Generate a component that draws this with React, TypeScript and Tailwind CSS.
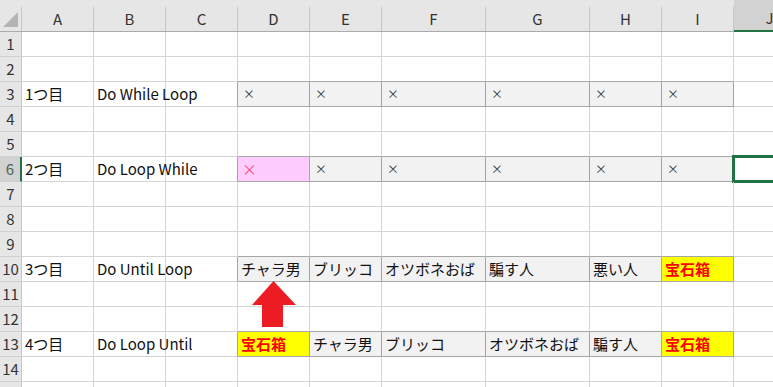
import React from "react";

type Fill = "gray" | "pink" | "yellow";

interface Cell {
  text?: string;
  fill?: Fill;
  tone?: "mark" | "markPink" | "gem";
}

const COLUMNS: { key: string; width: string }[] = [
  { key: "A", width: "w-[72px]" },
  { key: "B", width: "w-[72px]" },
  { key: "C", width: "w-[72px]" },
  { key: "D", width: "w-[72px]" },
  { key: "E", width: "w-[72px]" },
  { key: "F", width: "w-[104px]" },
  { key: "G", width: "w-[104px]" },
  { key: "H", width: "w-[72px]" },
  { key: "I", width: "w-[72px]" },
  { key: "J", width: "w-[72px]" },
];

const mark: Cell = { text: "×", fill: "gray", tone: "mark" };
const gem: Cell = { text: "宝石箱", fill: "yellow", tone: "gem" };
const name = (text: string): Cell => ({ text, fill: "gray" });

const SHEET: Record<number, Record<string, Cell>> = {
  3: {
    A: { text: "1つ目" },
    B: { text: "Do While Loop" },
    D: mark, E: mark, F: mark, G: mark, H: mark, I: mark,
  },
  6: {
    A: { text: "2つ目" },
    B: { text: "Do Loop While" },
    D: { text: "×", fill: "pink", tone: "markPink" },
    E: mark, F: mark, G: mark, H: mark, I: mark,
  },
  10: {
    A: { text: "3つ目" },
    B: { text: "Do Until Loop" },
    D: name("チャラ男"),
    E: name("ブリッコ"),
    F: name("オツボネおば"),
    G: name("騙す人"),
    H: name("悪い人"),
    I: gem,
  },
  13: {
    A: { text: "4つ目" },
    B: { text: "Do Loop Until" },
    D: gem,
    E: name("チャラ男"),
    F: name("ブリッコ"),
    G: name("オツボネおば"),
    H: name("騙す人"),
    I: gem,
  },
};

// row 15 only peeks in at the bottom edge, so its number isn't drawn
const ROWS = Array.from({ length: 15 }, (_, i) => i + 1);
const LAST_FULL_ROW = 14;

function boxed(row: number, col: number) {
  const key = COLUMNS[col]?.key;
  if (!key) return false;
  return !!SHEET[row]?.[key]?.fill;
}

const FILL_BG: Record<Fill, string> = {
  gray: "bg-[#f2f2f2]",
  pink: "bg-[#ffccff]",
  yellow: "bg-[#ffff00]",
};

const TONE: Record<string, string> = {
  mark: "text-[12px] text-[#3a3a3a] pl-[5px]",
  markPink: "text-[15px] text-[#ff4f7b] pl-[4px]",
  gem: "text-[15px] font-bold text-[#ff0000] pl-[3px]",
};

function GridCell({ row, col }: { row: number; col: number }) {
  const c = COLUMNS[col];
  const cell = SHEET[row]?.[c.key];
  const darkRight = boxed(row, col) || boxed(row, col + 1);
  const darkBottom = boxed(row, col) || boxed(row + 1, col);
  const selected = row === 6 && c.key === "J";

  return (
    <div
      className={`relative flex shrink-0 items-center overflow-visible whitespace-nowrap border-r border-b ${c.width} ${
        darkRight ? "border-r-[#a6a6a6]" : "border-r-[#d4d4d4]"
      } ${darkBottom ? "border-b-[#a6a6a6]" : "border-b-[#d4d4d4]"} ${
        cell?.fill ? FILL_BG[cell.fill] : ""
      }`}
    >
      {cell?.text && (
        <span
          className={
            cell.tone ? TONE[cell.tone] : "pl-[3px] text-[15px] text-[#111]"
          }
        >
          {cell.text}
        </span>
      )}
      {selected && (
        <div className="absolute -left-[2px] -top-[2px] h-[28px] w-[80px] border-[3px] border-[#217346]" />
      )}
    </div>
  );
}

export default function App() {
  return (
    <div
      className="relative h-[387px] w-[773px] overflow-hidden bg-white"
      style={{ fontFamily: '"Noto Sans CJK JP", "Noto Sans", sans-serif' }}
    >
      {/* column headers */}
      <div className="flex h-[32px] w-max bg-[#e6e6e6]">
        <div className="relative h-full w-[22px] shrink-0 border-b border-[#ababab]">
          <svg className="absolute left-0 top-0" width="22" height="31">
            <polygon points="3,27 18,12 18,27" fill="#b4b4b4" />
          </svg>
          <div className="absolute right-0 top-[7px] h-[24px] w-px bg-[#c6c6c6]" />
        </div>
        {COLUMNS.map((c, i) => {
          const active = c.key === "J";
          return (
            <div
              key={c.key}
              className={`relative flex h-full shrink-0 ${c.width} ${
                active
                  ? "border-b-2 border-[#217346] bg-[#d2d2d2]"
                  : "border-b border-[#ababab]"
              }`}
            >
              {i === COLUMNS.length - 1 && (
                <div className="absolute -left-px top-[7px] h-[24px] w-px bg-[#c6c6c6]" />
              )}
              <div className="flex flex-1 items-center justify-center pt-[7px] text-[15px] text-[#333]">
                {c.key}
              </div>
              <div className="mt-[7px] w-px bg-[#c6c6c6]" />
            </div>
          );
        })}
      </div>

      {/* rows */}
      {ROWS.map((r) => (
        <div key={r} className="flex h-[25px] w-max">
          <div
            className={`flex w-[22px] shrink-0 items-center justify-center border-b border-b-[#d0d0d0] text-[15px] ${
              r === 6
                ? "border-r-2 border-r-[#217346] bg-[#d2d2d2] text-[#4a6656]"
                : "border-r border-r-[#c6c6c6] bg-[#e6e6e6] text-[#333]"
            }`}
          >
            {r <= LAST_FULL_ROW ? r : null}
          </div>
          {COLUMNS.map((_, ci) => (
            <GridCell key={ci} row={r} col={ci} />
          ))}
        </div>
      ))}

      {/* red arrow pointing up at D10 */}
      <svg
        className="absolute left-[252px] top-[281px]"
        width="45"
        height="47"
        viewBox="0 0 45 47"
      >
        <polygon
          points="21.5,0 44,24 31,24 31,46 10,46 10,24 0,24"
          fill="#ed1c24"
        />
      </svg>
    </div>
  );
}
